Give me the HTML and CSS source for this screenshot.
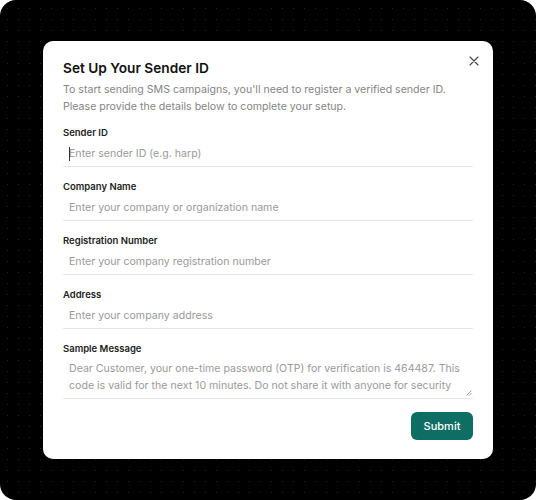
FILE: index.html
```html
<!DOCTYPE html>
<html lang="en">
<head>
<meta charset="utf-8">
<title>Set Up Your Sender ID</title>
<link rel="stylesheet" href="styles.css">
</head>
<body>
<div class="frame">
  <div class="modal">
    <button class="close" aria-label="Close">
      <svg width="10" height="10" viewBox="0 0 10 10"><path d="M1 1L9 9M9 1L1 9" stroke="#444" stroke-width="1.1" stroke-linecap="round"/></svg>
    </button>
    <h1 class="title">Set Up Your Sender ID</h1>
    <p class="desc">To start sending SMS campaigns, you'll need to register a verified sender ID. Please provide the details below to complete your setup.</p>
    <form class="form">
      <div class="field">
        <label class="label">Sender ID</label>
        <div class="input focused"><span class="caret"></span>Enter sender ID (e.g. harp)</div>
      </div>
      <div class="field">
        <label class="label">Company Name</label>
        <div class="input">Enter your company or organization name</div>
      </div>
      <div class="field">
        <label class="label">Registration Number</label>
        <div class="input">Enter your company registration number</div>
      </div>
      <div class="field">
        <label class="label">Address</label>
        <div class="input">Enter your company address</div>
      </div>
      <div class="field">
        <label class="label">Sample Message</label>
        <div class="textarea">
          <div class="ta-text">Dear Customer, your one-time password (OTP) for verification is 464487. This code is valid for the next 10 minutes. Do not share it with anyone for security reasons.</div>
          <svg class="grip" width="6" height="6" viewBox="0 0 6 6"><path d="M5.5 0.5L0.5 5.5M5.5 3L3 5.5" stroke="#888" stroke-width="0.8"/></svg>
        </div>
      </div>
      <div class="actions">
        <button type="button" class="submit">Submit</button>
      </div>
    </form>
  </div>
</div>
</body>
</html>
```
FILE: styles.css
```css
html, body {
  margin: 0;
  padding: 0;
  background: #fff;
}
body {
  font-family: Inter, "Noto Sans", sans-serif;
}
.frame {
  width: 536px;
  height: 500px;
  border-radius: 16px;
  background-color: #000;
  background-image: radial-gradient(circle, #262626 0.8px, transparent 1px);
  background-size: 11px 11px;
  background-position: 2px 3px;
  display: flex;
  align-items: center;
  justify-content: center;
}
.modal {
  position: relative;
  width: 450px;
  height: 418px;
  box-sizing: border-box;
  background: #fff;
  border-radius: 10px;
  padding: 17px 20px 20px;
  display: flex;
  flex-direction: column;
}
.close {
  position: absolute;
  top: 13px;
  right: 12px;
  width: 14px;
  height: 14px;
  padding: 0;
  border: 0;
  background: none;
  display: flex;
  align-items: center;
  justify-content: center;
}
.title {
  margin: 0;
  font-size: 13.7px;
  font-weight: 600;
  color: #111;
  line-height: 20px;
}
.desc {
  margin: 3px 0 0;
  font-size: 10.6px;
  line-height: 17px;
  color: #858585;
}
.form {
  display: flex;
  flex-direction: column;
  margin-top: 11px;
}
.field {
  display: flex;
  flex-direction: column;
  margin-bottom: 13px;
}
.field:last-of-type {
  margin-bottom: 10px;
}
.label {
  font-size: 9.5px;
  font-weight: 600;
  color: #222;
  line-height: 14px;
}
.input {
  position: relative;
  margin-top: 3px;
  padding: 4px 6px 5px;
  font-size: 10.6px;
  line-height: 14px;
  color: #9a9a9a;
  border-bottom: 1px solid #e6e6e6;
}
.caret {
  position: absolute;
  left: 6px;
  top: 4px;
  width: 1px;
  height: 14px;
  background: #333;
}
.textarea {
  position: relative;
  margin-top: 3px;
  height: 38px;
  padding: 1px 6px 0;
  overflow: hidden;
  border-bottom: 1px solid #e6e6e6;
}
.ta-text {
  font-size: 10.6px;
  line-height: 17px;
  color: #9a9a9a;
}
.grip {
  position: absolute;
  right: 1px;
  bottom: 2px;
}
.actions {
  display: flex;
  justify-content: flex-end;
}
.submit {
  font-family: inherit;
  font-size: 11px;
  font-weight: 500;
  color: #fff;
  background: #0e6e64;
  border: 0;
  border-radius: 6px;
  width: 62px;
  height: 28px;
}
```
